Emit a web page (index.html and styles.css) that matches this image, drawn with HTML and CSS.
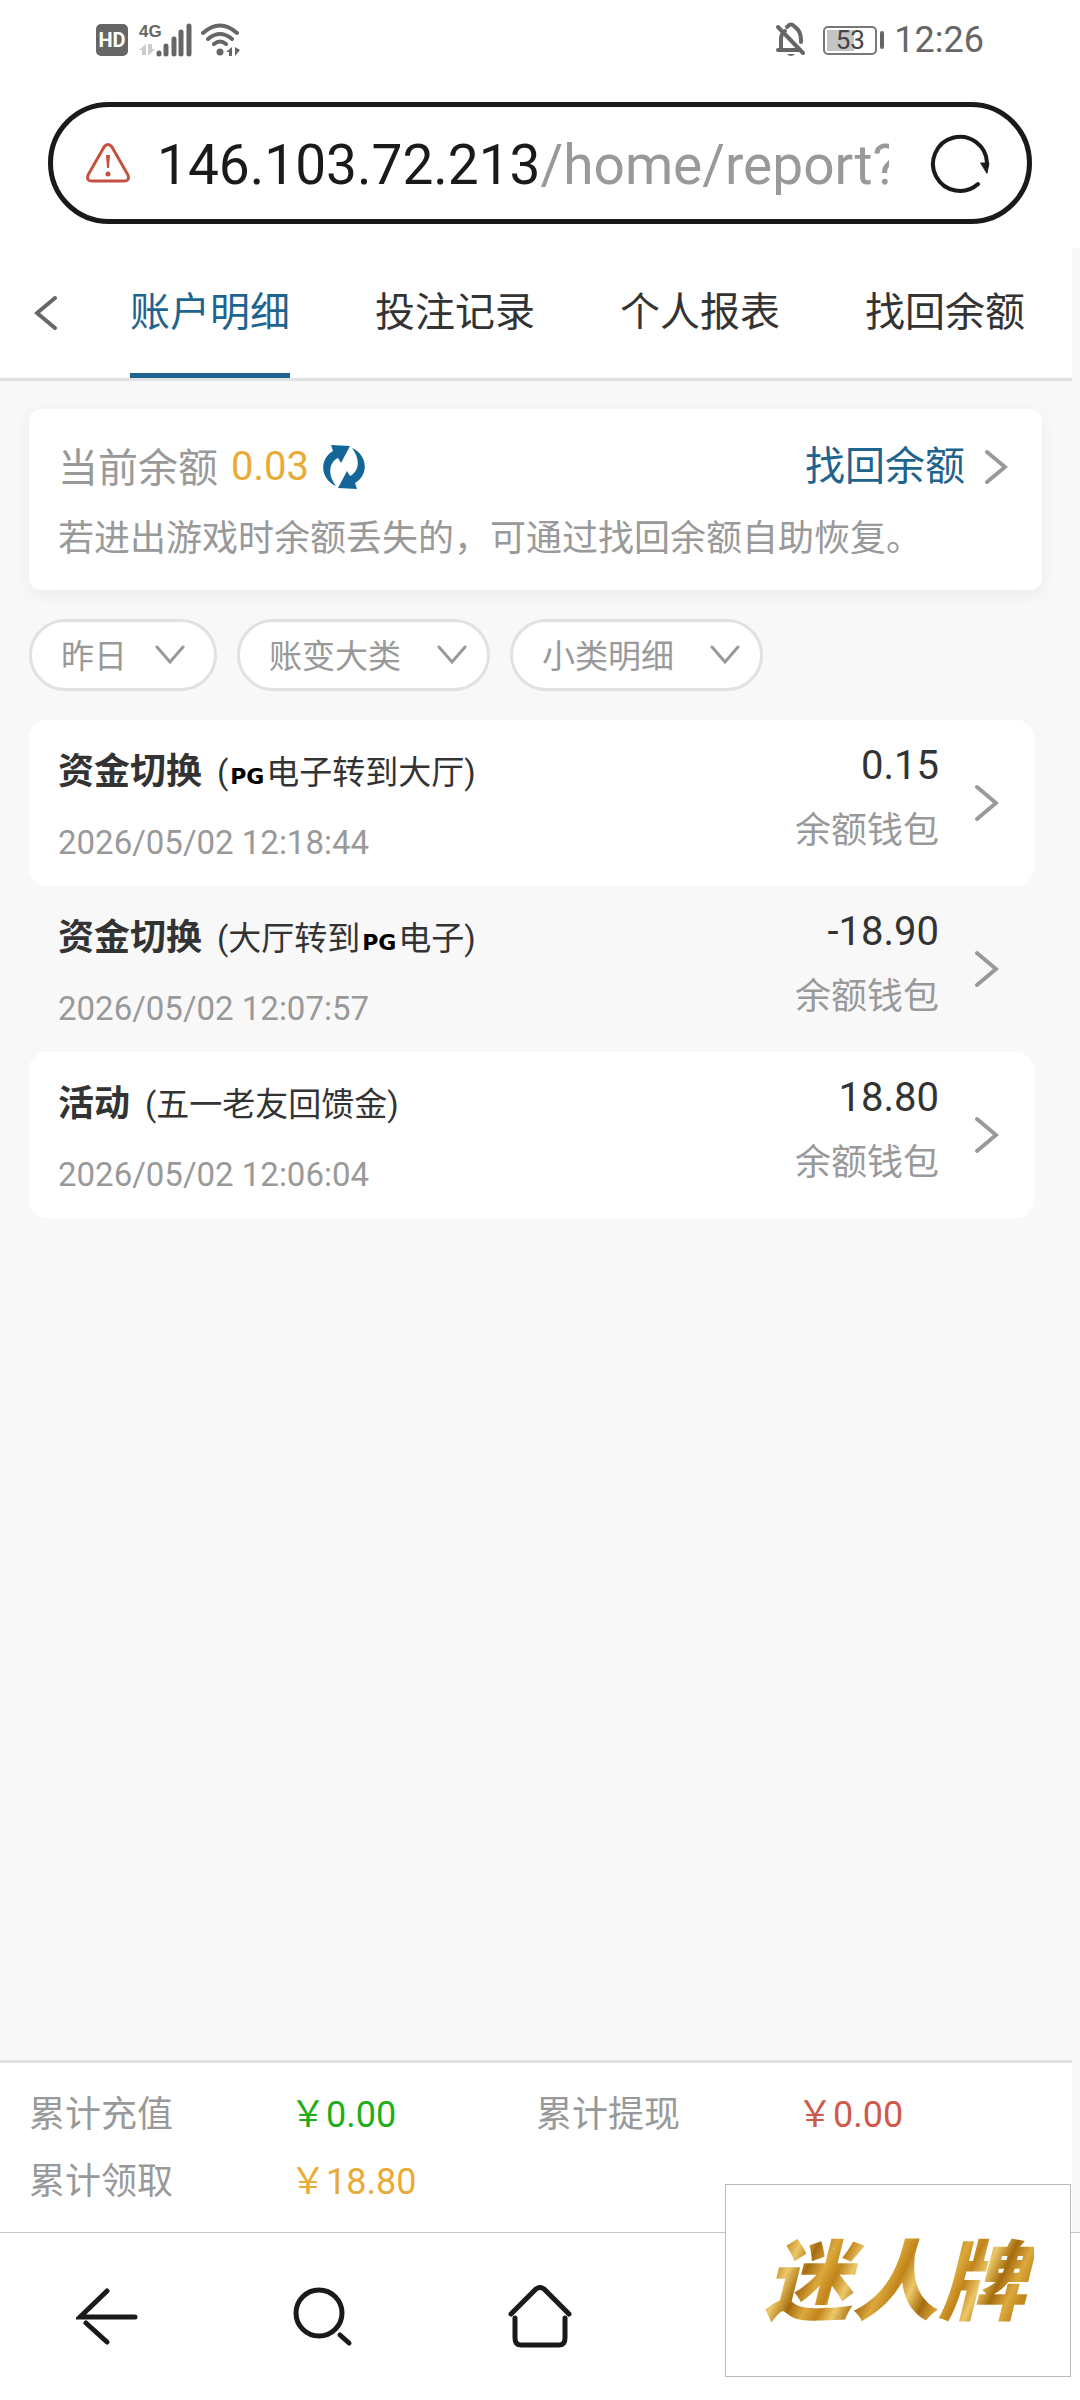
FILE: index.html
```
<!DOCTYPE html>
<html lang="zh-CN">
<head>
    <meta charset="UTF-8">
    <meta name="viewport" content="width=device-width, initial-scale=1.0">
    <title>账户明细</title>
    <link rel="stylesheet" href="styles.css">
</head>
<body>
    <!-- Status bar -->
    <div class="status-bar">
        <div class="status-left">
            <span class="hd">HD</span>
            <div class="network">
                <span class="net-type">4G</span>
                <svg class="net-arrows" width="16" height="12" viewBox="0 0 16 12" fill="#ccc"><path d="M0 6L7 0V11H3V6ZM16 5L10 11H9V0H13V5Z"/></svg>
            </div>
            <svg class="signal" width="36" height="34" viewBox="0 0 36 34" stroke="#666" stroke-width="5" stroke-linecap="round"><path d="M3 30V31M10 23V31M18 16V31M25 9V31M33 3V31"/></svg>
            <svg class="wifi" width="40" height="34" viewBox="0 0 40 34" fill="none" stroke="#666" stroke-width="4" stroke-linecap="round">
                <path d="M2 10Q19 -5 36 10M7 16Q19 6 31 16M13 21Q19 16 25 21"/>
                <circle cx="19" cy="29" r="3.5" fill="#666" stroke="none"/>
                <path d="M25 29L31 24V33H28V29ZM39 27L34 33V24Z" fill="#666" stroke="none"/>
            </svg>
        </div>
        <div class="status-right">
            <svg width="32" height="36" viewBox="0 0 32 36" fill="none" stroke="#666" stroke-width="4" stroke-linecap="round">
                <path d="M3 28H25M6 26V17Q6 12 10 9M12 5Q16 0 20 5Q26 9 26 18V20"/>
                <path d="M3 5L28 31"/>
                <path d="M12 32H20Q16 36 12 32Z" fill="#666" stroke="none"/>
            </svg>
            <div class="battery"><span class="battery-text">53</span></div>
            <span class="battery-tip"></span>
            <span class="clock">12:26</span>
        </div>
    </div>

    <!-- Address bar -->
    <div class="address-bar">
        <svg class="warning" width="46" height="42" viewBox="0 0 46 42" fill="none" stroke="#c5503e" stroke-width="3">
            <path d="M19 5Q23 0 27 5L43 33Q45 39 39 39H7Q1 39 3 33Z"/>
            <path d="M21 13H25L24 26H22Z" fill="#c5503e" stroke="none"/>
            <circle cx="23" cy="32" r="2.5" fill="#c5503e" stroke="none"/>
        </svg>
        <div class="url">146.103.72.213<span>/home/report?</span></div>
        <button type="button" class="reload" aria-label="刷新">
            <svg width="62" height="62" viewBox="0 0 62 62" fill="none" stroke="#1a1a1a" stroke-width="4" stroke-linecap="round">
                <path d="M49 52A27 27 0 1 1 58 31V33"/>
                <path d="M52 31H60L58 41Z" fill="#1a1a1a" stroke-width="1"/>
            </svg>
        </button>
    </div>

    <main class="page">
        <header class="tabs">
            <button type="button" class="back" aria-label="返回">
                <svg width="24" height="36" viewBox="0 0 24 36" fill="none" stroke="#666" stroke-width="4" stroke-linecap="round"><path d="M21 3L3 18L21 33"/></svg>
            </button>
            <nav class="tab-list">
                <a href="#" class="tab active">账户明细</a>
                <a href="#" class="tab">投注记录</a>
                <a href="#" class="tab">个人报表</a>
                <a href="#" class="tab">找回余额</a>
            </nav>
        </header>

        <section class="balance">
            <div class="balance-row">
                <span class="label">当前余额</span>
                <span class="amount">0.03</span>
                <button type="button" class="refresh" aria-label="刷新余额">
                    <svg width="42" height="44" viewBox="0 0 42 44" fill="#126798">
                        <path d="M8 0L27 1L18 18L15 13C5 18 5 31 13 41C-3 34 -4 14 10 6Z"/>
                        <path d="M34 44L15 43L24 26L27 31C37 26 37 13 29 3C45 10 46 30 32 38Z"/>
                    </svg>
                </button>
                <a href="#" class="recover">找回余额
                    <svg width="24" height="36" viewBox="0 0 24 36" fill="none" stroke="#999" stroke-width="4" stroke-linecap="round"><path d="M3 3L21 18L3 33"/></svg>
                </a>
            </div>
            <p class="tip">若进出游戏时余额丢失的，可通过找回余额自助恢复。</p>
        </section>

        <form class="filters">
            <label class="filter">
                <select aria-label="日期"><option>昨日</option></select>
                <svg width="30" height="20" viewBox="0 0 30 20"><path d="M2 2L15 17L28 2"/></svg>
            </label>
            <label class="filter wide">
                <select aria-label="账变大类"><option>账变大类</option></select>
                <svg width="30" height="20" viewBox="0 0 30 20"><path d="M2 2L15 17L28 2"/></svg>
            </label>
            <label class="filter wide">
                <select aria-label="小类明细"><option>小类明细</option></select>
                <svg width="30" height="20" viewBox="0 0 30 20"><path d="M2 2L15 17L28 2"/></svg>
            </label>
        </form>

        <ul class="records">
            <li class="record">
                <div class="info">
                    <div class="title"><b>资金切换</b><span>(<i class="pg">PG</i>电子转到大厅)</span></div>
                    <time>2026/05/02 12:18:44</time>
                </div>
                <div class="money">
                    <div class="value">0.15</div>
                    <div class="wallet">余额钱包</div>
                </div>
                <svg width="24" height="38" viewBox="0 0 24 38"><path d="M2 3L21 19L2 35"/></svg>
            </li>
            <li class="record">
                <div class="info">
                    <div class="title"><b>资金切换</b><span>(大厅转到<i class="pg">PG</i>电子)</span></div>
                    <time>2026/05/02 12:07:57</time>
                </div>
                <div class="money">
                    <div class="value">-18.90</div>
                    <div class="wallet">余额钱包</div>
                </div>
                <svg width="24" height="38" viewBox="0 0 24 38"><path d="M2 3L21 19L2 35"/></svg>
            </li>
            <li class="record">
                <div class="info">
                    <div class="title"><b>活动</b><span>(五一老友回馈金)</span></div>
                    <time>2026/05/02 12:06:04</time>
                </div>
                <div class="money">
                    <div class="value">18.80</div>
                    <div class="wallet">余额钱包</div>
                </div>
                <svg width="24" height="38" viewBox="0 0 24 38"><path d="M2 3L21 19L2 35"/></svg>
            </li>
        </ul>

        <dl class="totals">
            <div><dt>累计充值</dt><dd class="green">￥0.00</dd></div>
            <div><dt>累计提现</dt><dd class="red">￥0.00</dd></div>
            <div><dt>累计领取</dt><dd class="orange">￥18.80</dd></div>
        </dl>
    </main>

    <!-- Browser toolbar -->
    <nav class="toolbar">
        <button type="button" aria-label="后退">
            <svg width="64" height="64" viewBox="0 0 64 64"><path d="M31 6L4 32H59M10 38L31 57"/></svg>
        </button>
        <button type="button" aria-label="搜索">
            <svg width="64" height="64" viewBox="0 0 64 64"><circle cx="27" cy="28" r="23"/><path d="M48 50L57 58"/></svg>
        </button>
        <button type="button" aria-label="主页">
            <svg width="64" height="64" viewBox="0 0 64 64"><path d="M3 29L28 4Q32 1 36 4L61 29M7 33V53Q7 60 13 60H51Q57 60 57 53V33"/></svg>
        </button>
    </nav>

    <div class="ad"><span>迷人牌</span></div>
</body>
</html>
```

FILE: styles.css
```
* {
    box-sizing: border-box;
}

body {
    margin: 0;
    min-height: 100vh;
    display: flex;
    flex-direction: column;
    position: relative;
    font-family: Roboto, "Noto Sans CJK SC", sans-serif;
    color: #333;
    background-color: #fff;
}

button {
    display: flex;
    align-items: center;
    justify-content: center;
    padding: 0;
    border: none;
    background: none;
    cursor: pointer;
}

a {
    text-decoration: none;
}

svg {
    flex: none;
}

/* Status bar */
.status-bar {
    height: 80px;
    padding: 0 96px;
    display: flex;
    justify-content: space-between;
    align-items: center;
    color: #666;
}

.status-left, .status-right {
    display: flex;
    align-items: center;
}

.hd {
    width: 32px;
    height: 32px;
    line-height: 32px;
    border-radius: 5px;
    background-color: #666;
    color: white;
    font-size: 20px;
    font-weight: bold;
    text-align: center;
}

.network {
    display: flex;
    flex-direction: column;
    gap: 4px;
    margin-left: 11px;
}

.net-type {
    font-family: "Liberation Sans Narrow", "Liberation Sans", sans-serif;
    font-size: 17px;
    line-height: 16px;
    font-weight: bold;
}

.signal {
    margin-left: -6px;
}

.wifi {
    margin-left: 9px;
}

.battery {
    width: 54px;
    height: 29px;
    margin-left: 16px;
    padding: 2px;
    border: 2px solid #777;
    border-radius: 5px;
}

.battery-text {
    display: block;
    height: 21px;
    line-height: 21px;
    background: linear-gradient(to right, #c4c4c4 58%, transparent 58%);
    color: #444;
    font-size: 26px;
    text-align: center;
}

.battery-tip {
    width: 4px;
    height: 18px;
    margin-left: 3px;
    border-radius: 2px;
    background-color: #666;
}

.clock {
    margin-left: 10px;
    font-size: 36px;
}

/* Address bar */
.address-bar {
    height: 122px;
    margin: 22px 48px 24px;
    padding: 0 36px 0 32px;
    display: flex;
    align-items: center;
    border: 5px solid #1a1a1a;
    border-radius: 61px;
}

.url {
    flex: 1;
    margin: 0 40px 0 26px;
    padding-top: 4px;
    overflow: hidden;
    white-space: nowrap;
    font-size: 55px;
    line-height: 80px;
    color: #1a1a1a;
}

.url span {
    color: #999;
}

/* Page */
.page {
    flex: 1;
    display: flex;
    flex-direction: column;
    padding-right: 8px;
    background-color: #f8f8f8;
}

.tabs {
    height: 133px;
    display: flex;
    background-color: #fff;
    border-bottom: 3px solid #e1e1e1;
}

.back {
    width: 87px;
    height: 130px;
    padding-left: 4px;
}

.tab-list {
    flex: 1;
    display: flex;
    justify-content: space-between;
    padding: 0 47px 0 43px;
}

.tab {
    padding-top: 36px;
    font-size: 40px;
    line-height: 58px;
    color: #333;
}

.tab.active {
    color: #1f648e;
    background: linear-gradient(#1f648e, #1f648e) bottom / 100% 5px no-repeat;
}

.balance {
    margin: 28px 30px 29px 29px;
    padding: 29px 34px 24px 29px;
    border-radius: 12px;
    background-color: #fff;
    box-shadow: 0 4px 16px rgba(0, 0, 0, 0.06);
}

.balance-row {
    display: flex;
    align-items: center;
    height: 58px;
    font-size: 40px;
    line-height: 58px;
}

.label {
    padding-top: 4px;
    color: #999;
}

.amount {
    margin: 0 14px 0 13px;
    color: #e9ab38;
}

.recover {
    display: flex;
    align-items: center;
    gap: 19px;
    margin-left: auto;
    color: #1f648e;
}

.tip {
    margin: 16px 0 0;
    font-size: 36px;
    line-height: 54px;
    color: #999;
}

.filters {
    display: flex;
    gap: 20px;
    padding-left: 29px;
}

.filter {
    display: flex;
    align-items: center;
    gap: 28px;
    height: 72px;
    padding: 0 29px;
    border: 3px solid #e1e1e1;
    border-radius: 36px;
    background-color: #fff;
}

.filter.wide {
    gap: 36px;
    padding-right: 20px;
}

.filter select {
    appearance: none;
    padding: 4px 0 0;
    border: none;
    background: none;
    font-family: inherit;
    font-size: 33px;
    line-height: 48px;
    color: #999;
}

.filter path, .record path {
    fill: none;
    stroke: #999;
    stroke-width: 4;
    stroke-linecap: round;
}

.filter path {
    stroke-width: 3;
}

/* Records */
.records {
    flex: 1;
    margin: 29px 38px 28px 29px;
    padding: 0;
    list-style: none;
}

.record {
    display: flex;
    align-items: center;
    height: 166px;
    padding: 0 35px 0 29px;
    border-radius: 18px;
}

.record:nth-child(odd) {
    background-color: #fff;
}

.info {
    flex: 1;
    padding-top: 6px;
}

.title {
    margin-bottom: 20px;
    font-size: 33px;
    line-height: 52px;
}

.title b {
    margin-right: 15px;
    font-size: 36px;
}

.pg {
    display: inline-block;
    width: 38px;
    font-family: "DejaVu Sans", sans-serif;
    font-size: 22px;
    font-style: normal;
    font-weight: bold;
    line-height: 22px;
    text-align: center;
    color: #000;
}

.record time {
    display: block;
    font-size: 33px;
    line-height: 48px;
    color: #999;
}

.money {
    margin-right: 36px;
    padding-bottom: 4px;
    text-align: right;
}

.value {
    font-size: 40px;
    line-height: 60px;
}

.wallet {
    font-size: 36px;
    line-height: 70px;
    color: #999;
}

/* Totals */
.totals {
    display: grid;
    grid-template-columns: 1fr 1fr;
    margin: 0;
    padding: 19px 29px 16px;
    border-top: 3px solid #e1e1e1;
    background-color: #fff;
    font-size: 36px;
    line-height: 67px;
}

.totals div {
    display: flex;
}

.totals dt {
    width: 261px;
    color: #999;
}

.totals dd {
    margin: 0;
}

.green {
    color: #1fad1c;
}

.red {
    color: #cf5a4b;
}

.orange {
    color: #e9ab38;
}

/* Toolbar */
.toolbar {
    display: flex;
    height: 168px;
    border-top: 1px solid #c4c4c4;
    background-color: #fff;
}

.toolbar button {
    width: 20%;
}

.toolbar svg {
    fill: none;
    stroke: #1a1a1a;
    stroke-width: 5;
    stroke-linecap: round;
}

/* Floating ad over the bottom corner */
.ad {
    position: absolute;
    right: 9px;
    bottom: 23px;
    display: flex;
    align-items: center;
    justify-content: center;
    width: 346px;
    height: 193px;
    border: 1px solid #bbb;
    background-color: #fff;
}

.ad span {
    padding: 4px 8px 0 2px;
    background: repeating-linear-gradient(115deg, #a3690f 0, #dca93c 16px, #c0841a 30px, #ecc869 44px, #a8700f 60px);
    background-clip: text;
    -webkit-background-clip: text;
    color: transparent;
    font-size: 87px;
    font-style: italic;
    font-weight: 900;
    line-height: 120px;
}
```
